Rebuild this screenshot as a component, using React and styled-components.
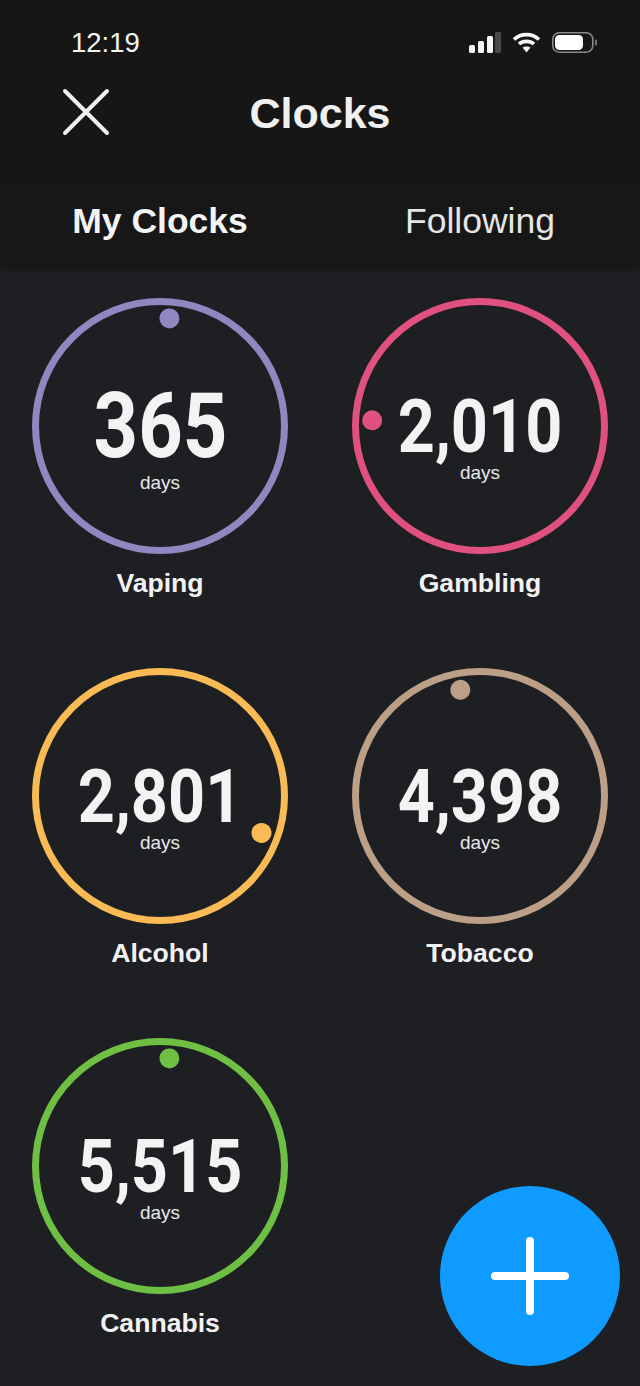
import React from "react";
import styled, { createGlobalStyle } from "styled-components";

const GlobalStyle = createGlobalStyle`
  html, body {
    margin: 0;
    padding: 0;
    background: #1e1f23;
  }
  * {
    box-sizing: border-box;
  }
`;

const clocks = [
  { name: "Vaping", value: "365", color: "#9187c0", angle: 5, big: true },
  { name: "Gambling", value: "2,010", color: "#e0517f", angle: 273 },
  { name: "Alcohol", value: "2,801", color: "#f9bb55", angle: 110 },
  { name: "Tobacco", value: "4,398", color: "#bb9f86", angle: 349.5 },
  { name: "Cannabis", value: "5,515", color: "#6fbf44", angle: 5 },
];

const App = () => {
  return (
    <Page>
      <GlobalStyle />
      <Header>
        <StatusBar>
          <Time>12:19</Time>
          <StatusIcons>
            <svg width="32" height="21" viewBox="0 0 32 21">
              <rect x="0" y="13" width="6" height="8" rx="1.5" fill="#f5f5f5" />
              <rect x="9" y="9" width="6" height="12" rx="1.5" fill="#f5f5f5" />
              <rect x="18" y="4" width="6" height="17" rx="1.5" fill="#f5f5f5" />
              <rect x="26" y="0" width="6" height="21" rx="1" fill="#4a4a4a" />
            </svg>
            <svg width="29" height="21" viewBox="0 0 29 21">
              <path d="M2 7.5 C9 1 20 1 27 7.5" fill="none" stroke="#f5f5f5" strokeWidth="3.6" />
              <path d="M7 12 C11 8.5 18 8.5 22 12" fill="none" stroke="#f5f5f5" strokeWidth="3.6" />
              <path d="M10.5 15.5 C12.5 14 16.5 14 18.5 15.5 L14.5 20.5 Z" fill="#f5f5f5" />
            </svg>
            <svg width="45" height="21" viewBox="0 0 45 21">
              <rect x="0.8" y="0.8" width="40" height="19.4" rx="6.5" fill="none" stroke="#8a8a8a" strokeWidth="1.6" />
              <rect x="3" y="3" width="28" height="15" rx="4.5" fill="#ffffff" />
              <rect x="43" y="7.5" width="2" height="6" rx="1" fill="#777" />
            </svg>
          </StatusIcons>
        </StatusBar>
        <NavBar>
          <CloseButton>
            <svg width="48" height="48" viewBox="0 0 48 48">
              <path
                d="M3 3 L45 45 M45 3 L3 45"
                fill="none"
                stroke="#f0f0f0"
                strokeWidth="4"
                strokeLinecap="round"
              />
            </svg>
          </CloseButton>
          <Title>Clocks</Title>
        </NavBar>
      </Header>
      <Tabs>
        <Tab $active>My Clocks</Tab>
        <Tab>Following</Tab>
      </Tabs>
      <Grid>
        {clocks.map((clock) => (
          <Clock key={clock.name}>
            <Ring $color={clock.color}>
              <Dot $color={clock.color} $angle={clock.angle} />
              <Count $big={clock.big}>{clock.value}</Count>
              <Unit>days</Unit>
            </Ring>
            <Label>{clock.name}</Label>
          </Clock>
        ))}
      </Grid>
      <AddButton>
        <svg width="78" height="78" viewBox="0 0 78 78">
          <path
            d="M39 4 V74 M4 39 H74"
            fill="none"
            stroke="#ffffff"
            strokeWidth="8"
            strokeLinecap="round"
          />
        </svg>
      </AddButton>
    </Page>
  );
};

const Page = styled.div`
  position: relative;
  width: 640px;
  height: 1386px;
  overflow: hidden;
  background: #1e1f23;
  font-family: "Liberation Sans", Arial, sans-serif;
  color: #f4f4f4;
`;

const Header = styled.header`
  height: 183px;
  padding-top: 28px;
  background: #161616;
  border-bottom: 1px solid #1a1a1a;
`;

const StatusBar = styled.div`
  display: flex;
  align-items: center;
  justify-content: space-between;
  height: 30px;
  padding: 0 43px 0 71px;
`;

const Time = styled.span`
  font-size: 27.5px;
  line-height: 30px;
  color: #f5f5f5;
`;

const StatusIcons = styled.div`
  display: flex;
  align-items: center;
  gap: 11px;
  margin-bottom: 2px;
`;

const NavBar = styled.div`
  position: relative;
  display: flex;
  align-items: center;
  justify-content: center;
  height: 60px;
  margin-top: 25px;
`;

const CloseButton = styled.div`
  position: absolute;
  left: 62px;
  top: 5px;
  width: 48px;
  height: 48px;
`;

const Title = styled.h1`
  margin: 0;
  font-size: 43px;
  font-weight: 700;
  line-height: 60px;
  color: #f0f0f0;
`;

const Tabs = styled.nav`
  display: grid;
  grid-template-columns: 1fr 1fr;
  align-items: start;
  height: 85px;
  padding-top: 5px;
  background: #171717;
  box-shadow: 0 2px 6px rgba(0, 0, 0, 0.25);
`;

const Tab = styled.div`
  text-align: center;
  font-size: 35.5px;
  line-height: 66px;
  font-weight: ${(p) => (p.$active ? 700 : 400)};
  color: ${(p) => (p.$active ? "#f4f4f4" : "#e6e6e6")};
`;

const Grid = styled.main`
  display: grid;
  grid-template-columns: repeat(2, 1fr);
  grid-auto-rows: 370px;
  padding-top: 30px;
`;

const Clock = styled.section`
  display: flex;
  flex-direction: column;
  align-items: center;
`;

const Ring = styled.div`
  position: relative;
  display: flex;
  flex-direction: column;
  align-items: center;
  justify-content: center;
  width: 256px;
  height: 256px;
  padding-top: 24px;
  border: 7px solid ${(p) => p.$color};
  border-radius: 50%;
`;

const Dot = styled.span`
  position: absolute;
  left: 50%;
  top: 50%;
  width: 20px;
  height: 20px;
  margin: -10px 0 0 -10px;
  border-radius: 50%;
  background: ${(p) => p.$color};
  transform: rotate(${(p) => p.$angle}deg) translateY(-108px);
`;

const Count = styled.div`
  font-family: Roboto, "Liberation Sans", sans-serif;
  font-weight: 700;
  font-size: ${(p) => (p.$big ? "90px" : "74px")};
  line-height: ${(p) => (p.$big ? "90px" : "70px")};
  color: #f3f3f3;
  white-space: nowrap;
  transform: scaleX(${(p) => (p.$big ? 0.863 : 0.875)});
`;

const Unit = styled.div`
  height: 22px;
  font-size: 19px;
  line-height: 22px;
  color: #e8e8e8;
`;

const Label = styled.div`
  margin-top: 13px;
  font-size: 26.6px;
  line-height: 32px;
  font-weight: 700;
  color: #f2f2f2;
`;

const AddButton = styled.button`
  position: absolute;
  left: 440px;
  top: 1186px;
  display: flex;
  align-items: center;
  justify-content: center;
  width: 180px;
  height: 180px;
  padding: 0;
  border: none;
  border-radius: 50%;
  background: #0f9bff;
`;

export default App;
